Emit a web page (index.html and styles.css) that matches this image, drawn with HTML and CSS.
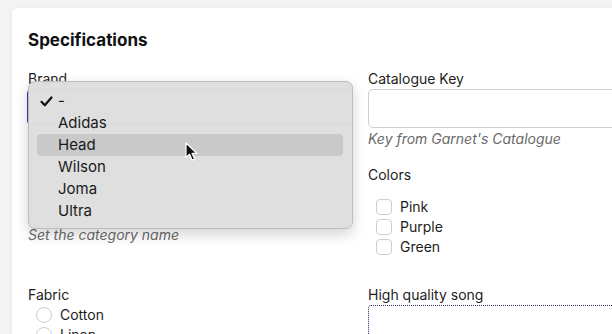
FILE: index.html
```html
<!DOCTYPE html>
<html lang="en">
<head>
  <meta charset="UTF-8">
  <title>Specifications</title>
  <link rel="stylesheet" href="styles.css">
</head>
<body>

  <div class="card">
    <h2 class="title">Specifications</h2>

    <div class="form-grid">
      <!-- Brand -->
      <div class="field brand-field">
        <label class="label">Brand</label>
        <div class="select"></div>
        <p class="hint hint-far">Set the category name</p>

        <!-- open select menu -->
        <ul class="menu">
          <li class="menu-item">
            <svg class="check" width="13" height="11" viewBox="0 0 13 11"><path d="M1.5 5.8 L4.8 9.2 L11.5 1.5" fill="none" stroke="#111" stroke-width="2.2" stroke-linecap="round" stroke-linejoin="round"/></svg>
            -
          </li>
          <li class="menu-item">Adidas</li>
          <li class="menu-item active">Head</li>
          <li class="menu-item">Wilson</li>
          <li class="menu-item">Joma</li>
          <li class="menu-item">Ultra</li>
        </ul>
        <svg class="cursor" width="14" height="20" viewBox="0 0 14 20"><path d="M1 1 L1 15.5 L4.6 12.3 L7.2 18.2 L9.6 17.1 L7.1 11.4 L11.8 11.4 Z" fill="#111" stroke="#fff" stroke-width="1.2" stroke-linejoin="round"/></svg>
      </div>

      <!-- Catalogue key + colors -->
      <div class="field">
        <label class="label">Catalogue Key</label>
        <div class="input"></div>
        <p class="hint">Key from Garnet's Catalogue</p>

        <label class="label colors-label">Colors</label>
        <div class="options">
          <div class="option"><span class="box"></span>Pink</div>
          <div class="option"><span class="box"></span>Purple</div>
          <div class="option"><span class="box"></span>Green</div>
        </div>
      </div>

      <!-- Fabric -->
      <div class="field">
        <label class="label">Fabric</label>
        <div class="option radio-option"><span class="radio"></span>Cotton</div>
        <div class="option radio-option"><span class="radio"></span>Linen</div>
      </div>

      <!-- Song upload -->
      <div class="field">
        <label class="label">High quality song</label>
        <div class="dropzone"></div>
      </div>
    </div>
  </div>

</body>
</html>
```

FILE: styles.css
```css
* {
  margin: 0;
  padding: 0;
  box-sizing: border-box;
}

body {
  font-family: 'Inter', 'Noto Sans', sans-serif;
  background: #f4f4f4;
  color: #1d1d1d;
  padding: 8px 0 0 12px;
  height: 334px;
  overflow: hidden;
}

.card {
  background: #fff;
  width: 720px;
  height: 400px;
  padding: 20px 0 0 16px;
  border-radius: 6px 0 0 0;
  box-shadow: 0 0 6px rgba(0, 0, 0, 0.05);
}

.title {
  font-size: 17px;
  font-weight: 700;
  line-height: 24px;
  color: #111;
}

.form-grid {
  display: grid;
  grid-template-columns: 325px 325px;
  column-gap: 15px;
  row-gap: 28px;
  margin-top: 17px;
}

.field {
  position: relative;
  display: flex;
  flex-direction: column;
}

.label {
  font-size: 14px;
  line-height: 20px;
  color: #1d1d1d;
}

.select {
  height: 36px;
  margin-left: -1px;
  border: 1px solid #3a36b8;
  border-radius: 4px;
  background: #fff;
}

.input {
  height: 39px;
  border: 1px solid #cfcfcf;
  border-radius: 5px;
  background: #fff;
}

.hint {
  font-size: 14px;
  font-style: italic;
  line-height: 20px;
  color: #6a6a6a;
  margin-top: 1px;
}

.hint-far {
  margin-top: 100px;
}

.colors-label {
  margin-top: 16px;
}

.options {
  margin-top: 12px;
}

.option {
  display: flex;
  align-items: center;
  font-size: 14px;
  line-height: 20px;
  color: #1d1d1d;
  padding-left: 8px;
}

.box {
  width: 16px;
  height: 16px;
  border: 1px solid #cdcdcd;
  border-radius: 4px;
  margin-right: 8px;
  background: #fff;
}

.radio {
  width: 16px;
  height: 16px;
  border: 1px solid #cdcdcd;
  border-radius: 50%;
  margin-right: 8px;
  background: #fff;
}

.dropzone {
  height: 60px;
  border: 1px dotted #2b2b6e;
  border-radius: 3px;
}

/* Menu abierto del select */
.menu {
  position: absolute;
  left: 0;
  top: 12px;
  width: 325px;
  list-style: none;
  background: rgba(222, 222, 222, 0.97);
  border: 1px solid #bdbdbd;
  border-radius: 7px;
  padding: 8px 8px 6px 8px;
  box-shadow: 0 5px 14px rgba(0, 0, 0, 0.18);
}

.menu-item {
  position: relative;
  height: 22px;
  line-height: 22px;
  font-size: 15px;
  color: #1a1a1a;
  padding-left: 21px;
  border-radius: 4px;
}

.menu-item.active {
  background: #c9c9c9;
  margin-right: 1px;
}

.check {
  position: absolute;
  left: 3px;
  top: 6px;
}

.cursor {
  position: absolute;
  left: 157px;
  top: 73px;
}
```
